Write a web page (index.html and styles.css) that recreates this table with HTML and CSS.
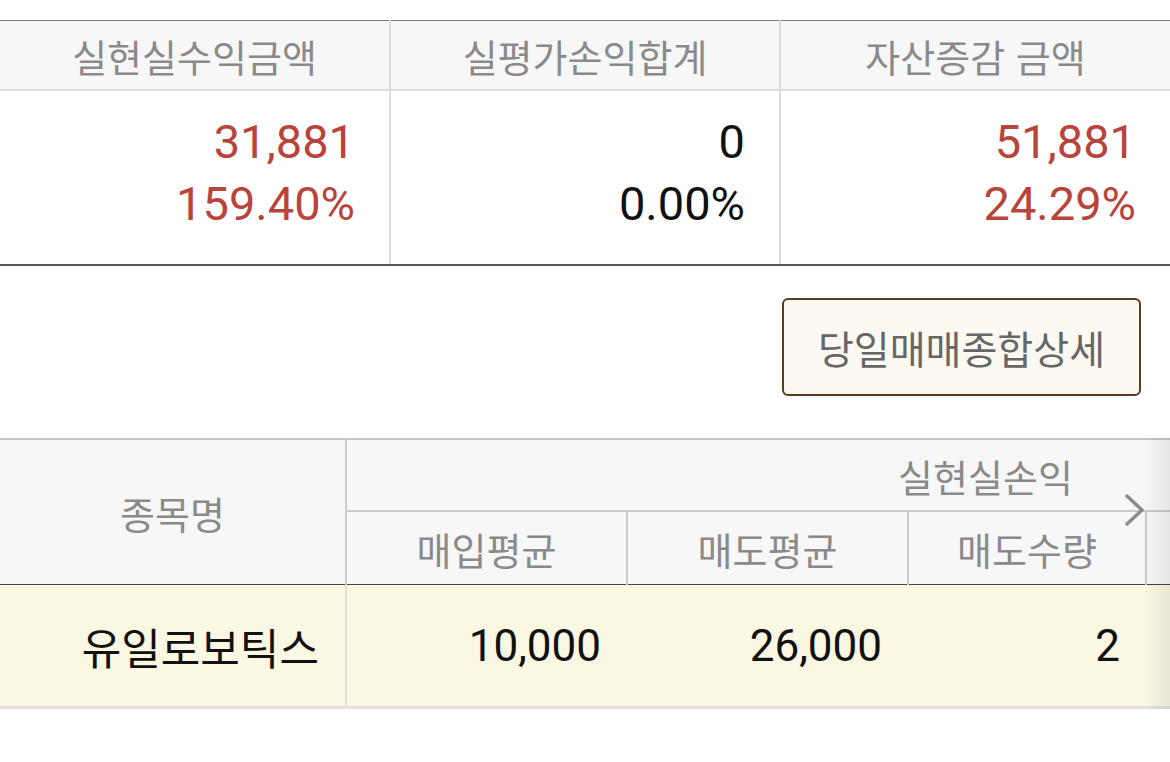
FILE: index.html
```html
<!DOCTYPE html>
<html lang="ko">
<head>
  <meta charset="UTF-8">
  <meta name="viewport" content="width=device-width, initial-scale=1.0">
  <title>당일매매 실현손익</title>
  <link rel="stylesheet" href="styles.css">
</head>
<body>
  <table class="summary">
    <thead>
      <tr>
        <th>실현실수익금액</th>
        <th>실평가손익합계</th>
        <th>자산증감 금액</th>
      </tr>
    </thead>
    <tbody>
      <tr>
        <td class="up">31,881<br>159.40%</td>
        <td>0<br>0.00%</td>
        <td class="up">51,881<br>24.29%</td>
      </tr>
    </tbody>
  </table>

  <div class="actions">
    <button class="detail-btn">당일매매종합상세</button>
  </div>

  <div class="grid-wrap">
    <table class="grid">
      <colgroup>
        <col class="c-name">
        <col class="c-num">
        <col class="c-num">
        <col class="c-qty">
        <col class="c-more">
      </colgroup>
      <thead>
        <tr>
          <th rowspan="2" class="name-head">종목명</th>
          <th colspan="4" class="group-head">실현실손익</th>
        </tr>
        <tr class="sub-head">
          <th>매입평균</th>
          <th>매도평균</th>
          <th>매도수량</th>
          <th></th>
        </tr>
      </thead>
      <tbody>
        <tr>
          <td class="name">유일로보틱스</td>
          <td>10,000</td>
          <td>26,000</td>
          <td>2</td>
          <td></td>
        </tr>
      </tbody>
    </table>
    <span class="more-arrow">
      <svg width="22" height="34" viewBox="0 0 22 34">
        <path d="M3 3 L18 17 L3 31" fill="none" stroke="#8a8a8a" stroke-width="3.5" stroke-linecap="round" stroke-linejoin="round"/>
      </svg>
    </span>
    <div class="edge-shade"></div>
  </div>
</body>
</html>
```

FILE: styles.css
```css
body {
  margin: 0;
  padding-top: 20px;
  background: #fff;
  font-family: "Noto Sans CJK KR", "Noto Sans", sans-serif;
  width: 1170px;
  overflow: hidden;
}

/* 상단 요약 */
.summary {
  width: 100%;
  table-layout: fixed;
  border-collapse: collapse;
  border-top: 1px solid #777;
}

.summary th {
  height: 68px;
  padding: 0;
  background: #f7f7f7;
  color: #8a8a8a;
  font-size: 38px;
  font-weight: 400;
  text-align: center;
  border-bottom: 2px solid #dcdcdc;
  border-left: 2px solid #dcdcdc;
}

.summary td {
  height: 163px;
  padding: 0 34px 10px 0;
  font-family: Roboto, "Noto Sans CJK KR", sans-serif;
  font-size: 47px;
  line-height: 62px;
  text-align: right;
  color: #111;
  border-left: 2px solid #dcdcdc;
  border-bottom: 2px solid #555;
}

.summary th:first-child,
.summary td:first-child {
  border-left: none;
}

.summary td.up {
  color: #b8443b;
}

/* 버튼 영역 */
.actions {
  display: flex;
  justify-content: flex-end;
  padding: 32px 29px 42px 0;
}

.detail-btn {
  width: 359px;
  height: 98px;
  background: #fbf9f1;
  border: 2px solid #5b3a22;
  border-radius: 6px;
  color: #666;
  font-family: inherit;
  font-size: 39px;
  padding: 0;
}

/* 종목 그리드 */
.grid-wrap {
  position: relative;
  width: 1170px;
  overflow: hidden;
}

.grid {
  width: 1624px;
  table-layout: fixed;
  border-collapse: collapse;
  border-top: 2px solid #c4c4c4;
}

.c-name { width: 346px; }
.c-num { width: 281px; }
.c-qty { width: 238px; }
.c-more { width: 478px; }

.grid th {
  background: #f7f7f7;
  color: #8a8a8a;
  font-size: 38px;
  font-weight: 400;
  padding: 0;
  border-left: 2px solid #cacaca;
}

.grid th.name-head {
  border-left: none;
  border-bottom: 1px solid #444;
}

.grid th.group-head {
  height: 70px;
  border-bottom: 2px solid #cacaca;
}

.grid .sub-head th {
  height: 72px;
  border-bottom: 1px solid #444;
}

.grid td {
  height: 121px;
  padding: 0 26px 0 0;
  background: #faf7e3;
  color: #111;
  font-family: Roboto, "Noto Sans CJK KR", sans-serif;
  font-size: 44px;
  text-align: right;
  border-bottom: 3px solid #e2e2e2;
}

.grid td.name {
  font-family: "Noto Sans CJK KR", sans-serif;
  font-size: 43px;
}

.grid td:nth-child(2) {
  border-left: 2px solid #e4e2d2;
}

.more-arrow {
  position: absolute;
  left: 1124px;
  top: 55px;
}

.edge-shade {
  position: absolute;
  top: 0;
  right: 0;
  width: 26px;
  height: 100%;
  background: linear-gradient(to right, rgba(0, 0, 0, 0), rgba(0, 0, 0, 0.07));
}
```
